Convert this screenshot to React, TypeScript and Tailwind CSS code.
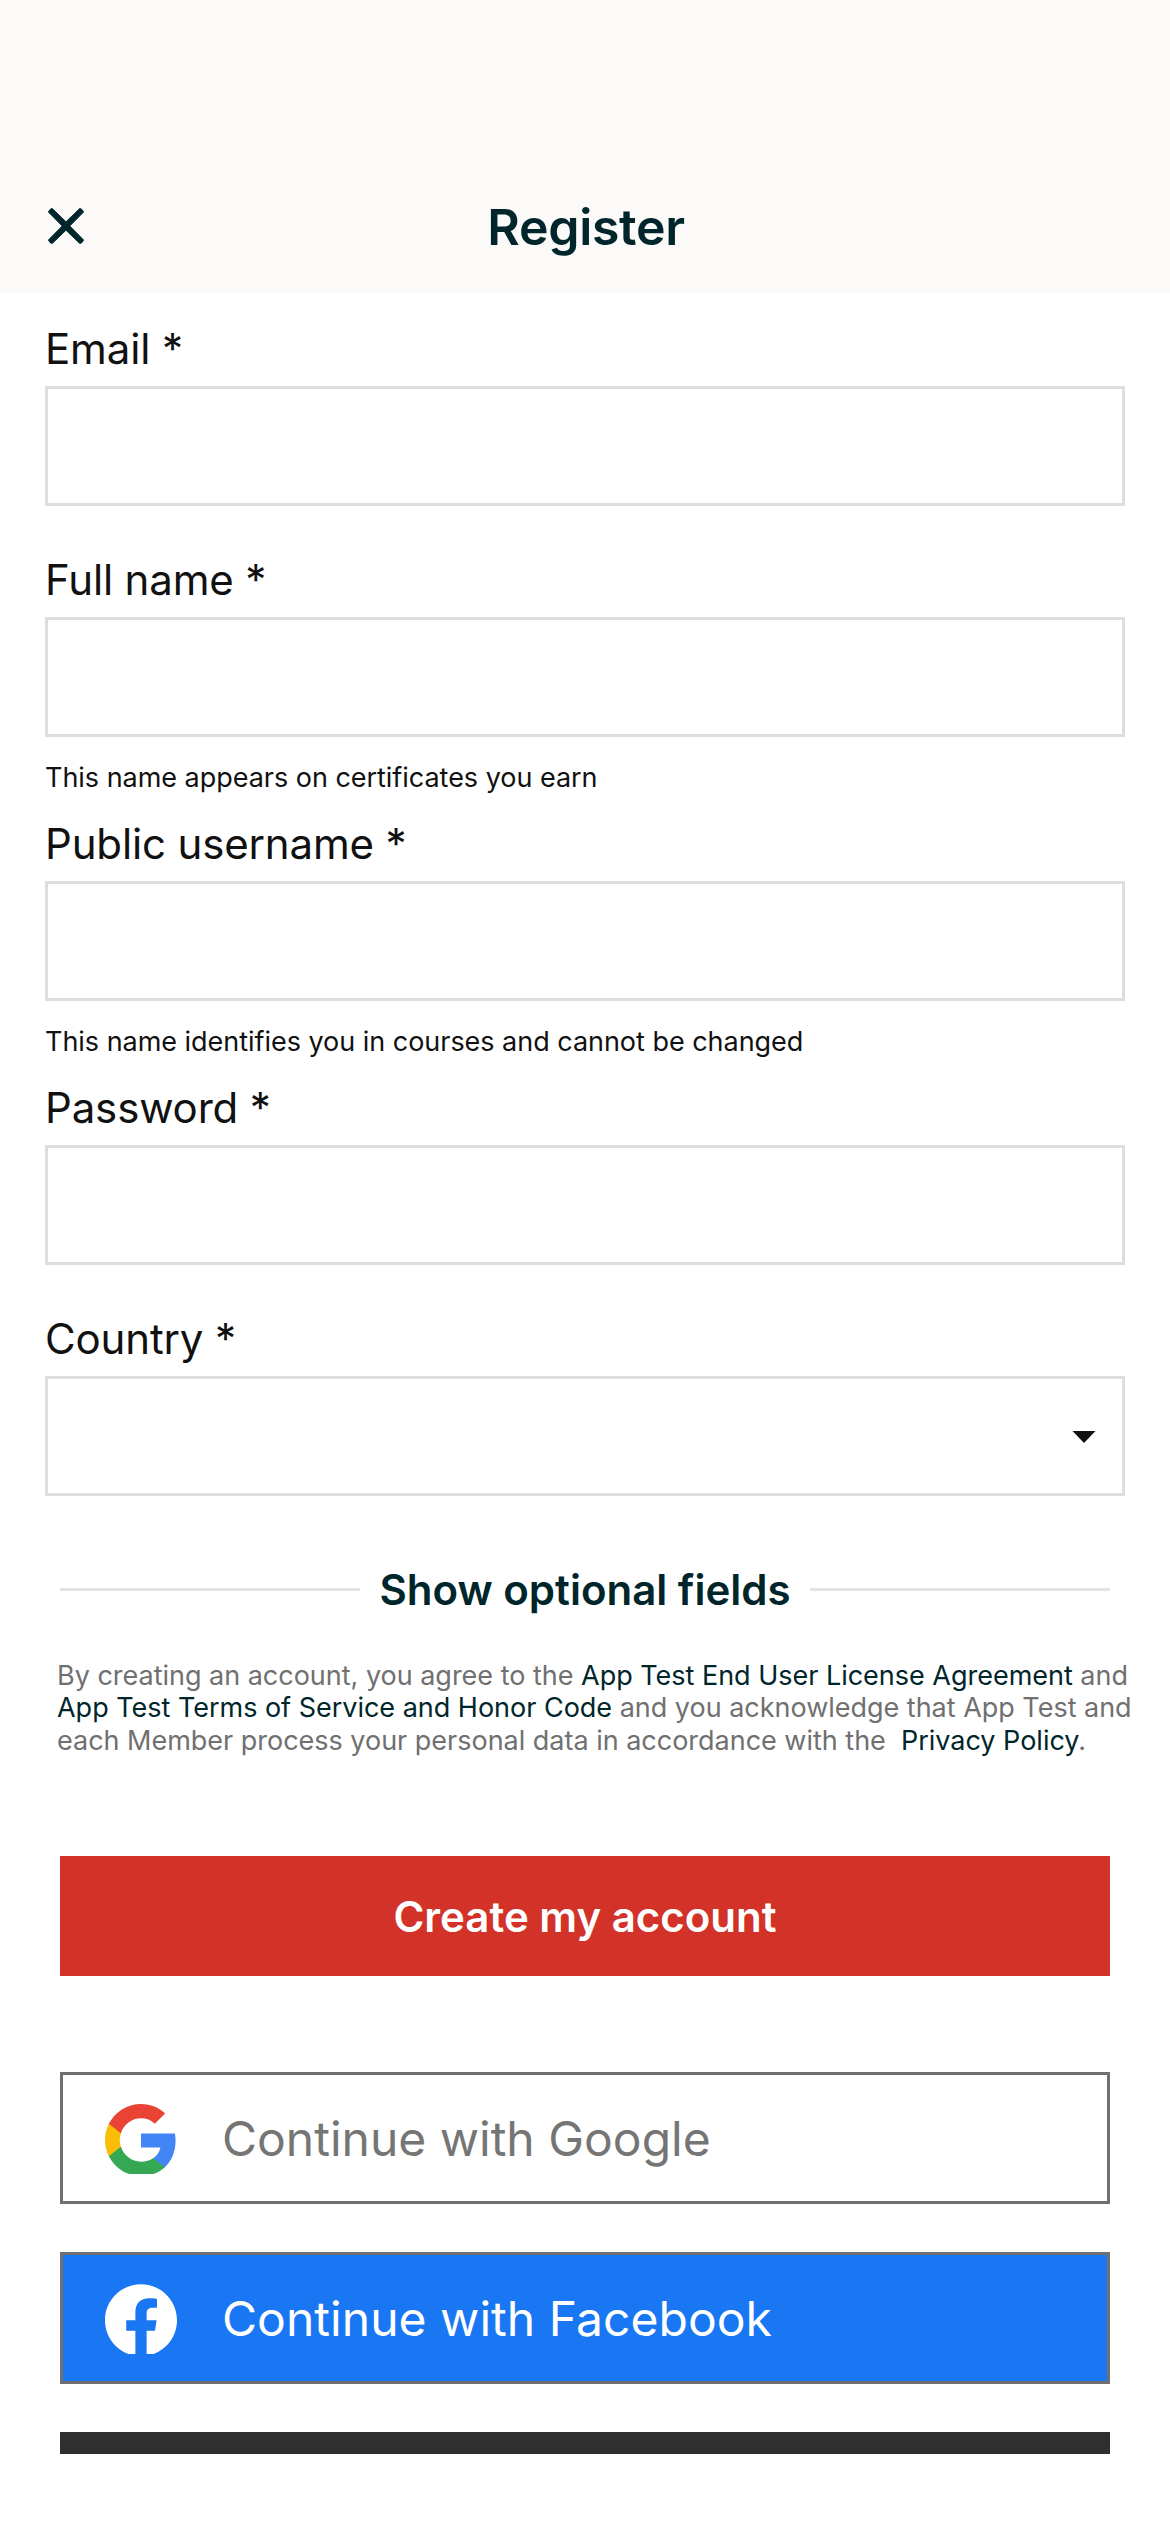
import React from "react";

type FieldProps = { label: string; hint?: string; select?: boolean };

function Field({ label, hint, select }: FieldProps) {
  return (
    <div className="flex flex-col">
      <label className="text-[42px] leading-[51px] tracking-[-0.15px] text-[#111111]">{label}</label>
      <div className="mt-3 flex h-[120px] items-center justify-end border-[3px] border-[#e1dddb] bg-white pr-[26px]">
        {select && (
          <svg width="24" height="12" viewBox="0 0 24 12" className="mt-[2px]">
            <path d="M0.5 0h23L12 12z" fill="#111111" />
          </svg>
        )}
      </div>
      {hint ? (
        <p className="mt-6 mb-6 text-[27px] leading-[33px] tracking-[-0.03px] text-[#111111]">{hint}</p>
      ) : (
        <div className="h-12" />
      )}
    </div>
  );
}

function GoogleLogo() {
  return (
    <svg width="72" height="70" viewBox="1 1 22 21.39" className="mt-[2px]">
      <path fill="#4285F4" d="M22.56 12.25c0-.78-.07-1.53-.2-2.25H12v4.26h5.92c-.26 1.37-1.04 2.53-2.21 3.31v2.77h3.57c2.08-1.92 3.28-4.74 3.28-8.09z" />
      <path fill="#34A853" d="M12 23c2.97 0 5.46-.98 7.28-2.66l-3.57-2.77c-.98.66-2.23 1.06-3.71 1.06-2.86 0-5.29-1.93-6.16-4.53H2.18v2.84C3.99 20.53 7.7 23 12 23z" />
      <path fill="#FBBC05" d="M5.84 14.09c-.22-.66-.35-1.36-.35-2.09s.13-1.43.35-2.09V7.07H2.18C1.43 8.55 1 10.22 1 12s.43 3.45 1.18 4.93l2.85-2.22.81-.62z" />
      <path fill="#EA4335" d="M12 5.38c1.62 0 3.06.56 4.21 1.64l3.15-3.15C17.45 2.09 14.97 1 12 1 7.7 1 3.99 3.47 2.18 7.07l3.66 2.84c.87-2.6 3.3-4.53 6.16-4.53z" />
    </svg>
  );
}

function FacebookLogo() {
  return (
    <svg width="72" height="70" viewBox="0 0 24 23.33" className="mt-[2px]">
      <path
        fill="#ffffff"
        d="M24 12.073c0-6.627-5.373-12-12-12s-12 5.373-12 12c0 5.99 4.388 10.954 10.125 11.854v-8.385H7.078v-3.47h3.047V9.43c0-3.007 1.792-4.669 4.533-4.669 1.312 0 2.686.235 2.686.235v2.953H15.83c-1.491 0-1.956.925-1.956 1.874v2.25h3.328l-.532 3.47h-2.796v8.385C19.612 23.027 24 18.062 24 12.073z"
      />
    </svg>
  );
}

export default function App() {
  return (
    <div className="h-[2532px] w-[1170px] overflow-hidden bg-white font-['Inter',sans-serif]">
      <header className="grid h-[293px] grid-cols-[1fr_auto_1fr] items-end bg-[#fbfaf8] pb-[34px] pl-[2px]">
        <button className="mb-[14px] ml-[45px] w-[38px]" aria-label="Close">
          <svg width="38" height="38" viewBox="0 0 38 38" fill="#00262b" stroke="#00262b" strokeWidth="0.9" strokeLinejoin="round">
            <path d="M5.2 1.4L19 14.8 32.8 1.4Q35 1.4 36.6 5L22.8 19 36.6 33Q35 36.6 32.8 36.6L19 23.2 5.2 36.6Q3 36.6 1.4 33L15.2 19 1.4 5Q3 1.4 5.2 1.4z" />
          </svg>
        </button>
        <h1 className="text-[50px] leading-[64px] font-semibold tracking-[-0.3px] text-[#00262b]">Register</h1>
      </header>

      <main className="px-[45px] pt-[30px]">
        <Field label="Email *" />
        <Field label="Full name *" hint="This name appears on certificates you earn" />
        <Field label="Public username *" hint="This name identifies you in courses and cannot be changed" />
        <Field label="Password *" />
        <Field label="Country *" select />

        <div className="mx-[15px] mt-[20px] flex h-[51px] items-center justify-between">
          <span className="h-[3px] w-[300px] bg-[#e0e4e3]" />
          <span className="text-[42px] leading-[51px] font-semibold text-[#00262b]">Show optional fields</span>
          <span className="h-[3px] w-[300px] bg-[#e0e4e3]" />
        </div>

        <p className="mt-[44px] ml-[12px] text-[27px] leading-[33px] tracking-[-0.015px] whitespace-nowrap text-[#707070]">
          <span className="block">
            By creating an account, you agree to the <a className="text-[#00262b]">App Test End User License Agreement</a> and
          </span>
          <span className="-mt-px block">
            <a className="text-[#00262b]">App Test Terms of Service and Honor Code</a> and you acknowledge that App Test and
          </span>
          <span className="block">
            each Member process your personal data in accordance with the &nbsp;<a className="text-[#00262b]">Privacy Policy</a>.
          </span>
        </p>

        <div className="mx-[15px] mt-[99px] flex flex-col">
          <button className="h-[120px] bg-[#d23228] text-[42px] leading-[51px] font-semibold text-white">
            Create my account
          </button>
          <button className="mt-24 flex h-[132px] items-center border-[3px] border-[#707070] bg-white pl-[42px] text-[48px] text-[#757575]">
            <GoogleLogo />
            <span className="mt-[2px] ml-[45px]">Continue with Google</span>
          </button>
          <button className="mt-12 flex h-[132px] items-center border-[3px] border-[#707070] bg-[#1977f3] pl-[42px] text-[48px] text-white">
            <FacebookLogo />
            <span className="mt-[2px] ml-[45px] tracking-[0.04px]">Continue with Facebook</span>
          </button>
          <div className="mt-12 h-[22px] bg-[#2f2f2f]" />
        </div>
      </main>
    </div>
  );
}
